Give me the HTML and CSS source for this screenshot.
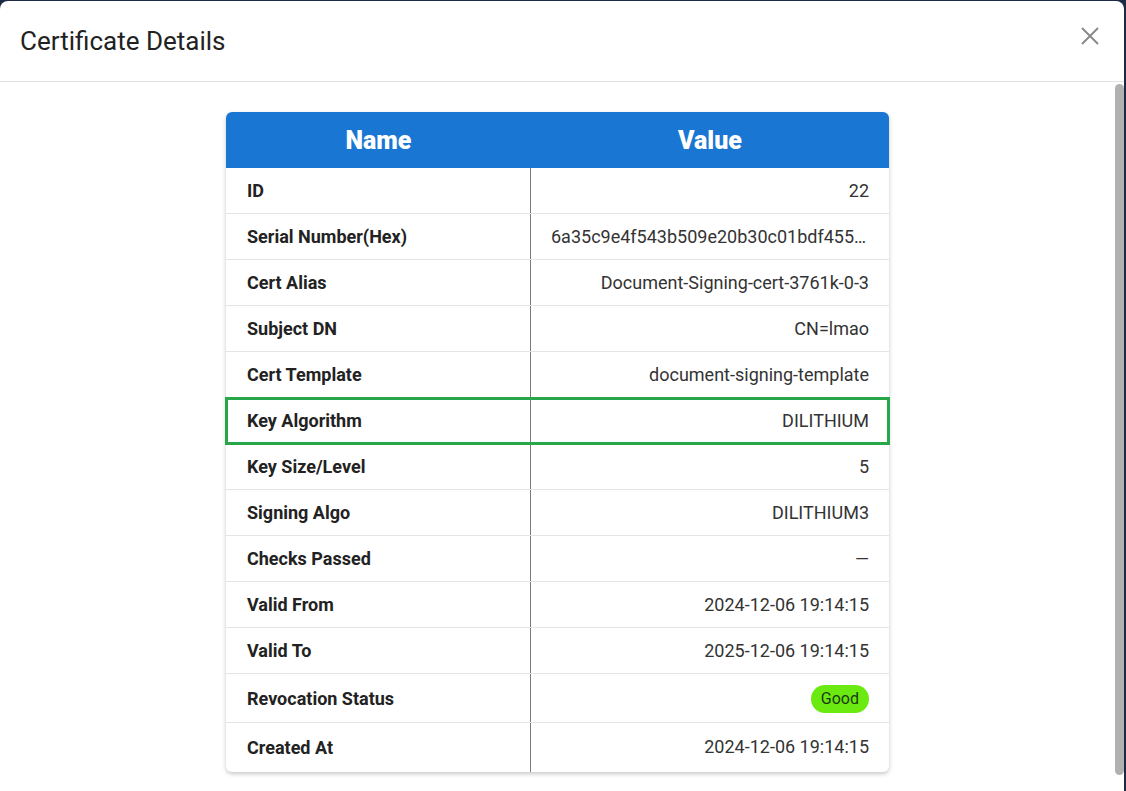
FILE: index.html
```html
<!DOCTYPE html>
<html lang="en">
<head>
    <meta charset="UTF-8">
    <meta name="viewport" content="width=device-width, initial-scale=1.0">
    <title>Certificate Details</title>
    <link rel="stylesheet" href="styles.css">
</head>
<body>
    <div class="modal">
        <div class="modal-header">
            <h2>Certificate Details</h2>
            <button class="close" aria-label="Close">
                <svg width="20" height="20" viewBox="0 0 20 20">
                    <path d="M2 2 L18 18 M18 2 L2 18" stroke="#8a8a8a" stroke-width="2" fill="none"/>
                </svg>
            </button>
        </div>
        <div class="modal-main">
            <div class="modal-body">
                <div class="details">
                    <div class="row head">
                        <div class="cell">Name</div>
                        <div class="cell">Value</div>
                    </div>
                    <div class="row">
                        <div class="cell name">ID</div>
                        <div class="cell value">22</div>
                    </div>
                    <div class="row">
                        <div class="cell name">Serial Number(Hex)</div>
                        <div class="cell value serial">6a35c9e4f543b509e20b30c01bdf455…</div>
                    </div>
                    <div class="row">
                        <div class="cell name">Cert Alias</div>
                        <div class="cell value">Document-Signing-cert-3761k-0-3</div>
                    </div>
                    <div class="row">
                        <div class="cell name">Subject DN</div>
                        <div class="cell value">CN=lmao</div>
                    </div>
                    <div class="row">
                        <div class="cell name">Cert Template</div>
                        <div class="cell value">document-signing-template</div>
                    </div>
                    <div class="row highlight">
                        <div class="cell name">Key Algorithm</div>
                        <div class="cell value">DILITHIUM</div>
                    </div>
                    <div class="row">
                        <div class="cell name">Key Size/Level</div>
                        <div class="cell value">5</div>
                    </div>
                    <div class="row">
                        <div class="cell name">Signing Algo</div>
                        <div class="cell value">DILITHIUM3</div>
                    </div>
                    <div class="row">
                        <div class="cell name">Checks Passed</div>
                        <div class="cell value">—</div>
                    </div>
                    <div class="row">
                        <div class="cell name">Valid From</div>
                        <div class="cell value">2024-12-06 19:14:15</div>
                    </div>
                    <div class="row">
                        <div class="cell name">Valid To</div>
                        <div class="cell value">2025-12-06 19:14:15</div>
                    </div>
                    <div class="row tall">
                        <div class="cell name">Revocation Status</div>
                        <div class="cell value"><span class="chip">Good</span></div>
                    </div>
                    <div class="row tall last">
                        <div class="cell name">Created At</div>
                        <div class="cell value">2024-12-06 19:14:15</div>
                    </div>
                </div>
            </div>
            <div class="scrollbar">
                <div class="thumb"></div>
            </div>
        </div>
    </div>
</body>
</html>
```

FILE: styles.css
```css
html, body {
    margin: 0;
    padding: 0;
    height: 100%;
    overflow: hidden;
}

body {
    font-family: Roboto, 'Liberation Sans', sans-serif;
    background-color: #1c2a44;
    padding: 1px 2px 0 0;
    box-sizing: border-box;
}

.modal {
    background-color: #ffffff;
    height: 100%;
    border-radius: 8px 8px 0 0;
    display: flex;
    flex-direction: column;
}

.modal-header {
    height: 80px;
    flex-shrink: 0;
    border-bottom: 1px solid #e2e2e2;
    display: flex;
    align-items: center;
    justify-content: space-between;
    padding: 0 24px 0 20px;
}

.modal-header h2 {
    margin: 0;
    font-size: 26px;
    font-weight: 400;
    color: #222222;
}

.close {
    background: none;
    border: none;
    padding: 0;
    margin-top: -10px;
    cursor: pointer;
    display: flex;
}

.modal-main {
    flex: 1;
    display: flex;
    min-height: 0;
}

.modal-body {
    flex: 1;
    overflow: hidden;
    padding: 30px 0 40px;
}

.scrollbar {
    width: 9px;
    padding: 2px 0 16px;
    flex-shrink: 0;
    display: flex;
}

.thumb {
    flex: 1;
    background-color: #b1b1b1;
    border-radius: 5px;
}

.details {
    width: 663px;
    margin-left: 226px;
    border-radius: 6px;
    box-shadow: 0 2px 4px rgba(0, 0, 0, 0.22);
}

.row {
    display: grid;
    grid-template-columns: 305px 1fr;
    height: 46px;
    border-bottom: 1px solid #e4e4e4;
    box-sizing: border-box;
}

.row.tall {
    height: 49px;
}

.row.last {
    border-bottom: none;
}

.row.head {
    height: 56px;
    background-color: #1976d2;
    border-radius: 6px 6px 0 0;
    border-bottom: none;
}

.row.head .cell {
    justify-content: center;
    color: #ffffff;
    font-size: 25px;
    font-weight: 900;
}

.cell {
    display: flex;
    align-items: center;
    min-width: 0;
}

.cell.name {
    padding-left: 21px;
    font-size: 18px;
    font-weight: 700;
    color: #222222;
    border-right: 1px solid #7a7a7a;
}

.cell.value {
    display: block;
    line-height: 45px;
    padding: 0 20px;
    text-align: right;
    font-size: 18px;
    color: #333333;
    white-space: nowrap;
}

.cell.serial {
    text-align: left;
}

.row.tall .cell.value {
    line-height: 48px;
}

.highlight {
    outline: 3px solid #27a74a;
    outline-offset: -2px;
}

.chip {
    display: inline-block;
    background-color: #6aea10;
    color: #1d3a10;
    font-size: 16px;
    line-height: 28px;
    padding: 0 10px;
    border-radius: 14px;
    vertical-align: middle;
}
```
